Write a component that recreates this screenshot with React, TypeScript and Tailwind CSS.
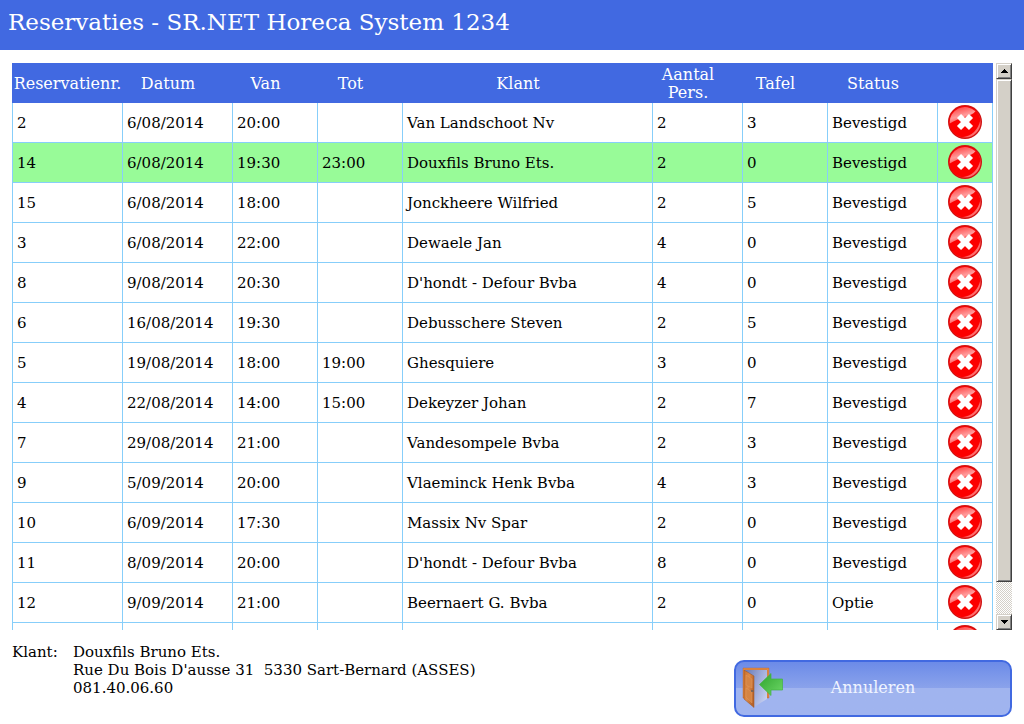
import { useRef } from 'react';

type Reservation = {
  nr: string;
  date: string;
  from: string;
  to: string;
  customer: string;
  persons: string;
  table: string;
  status: string;
};

function row(
  nr: string,
  date: string,
  from: string,
  to: string,
  customer: string,
  persons: string,
  table: string,
  status = 'Bevestigd',
): Reservation {
  return { nr, date, from, to, customer, persons, table, status };
}

const RESERVATIONS: Reservation[] = [
  row('2', '6/08/2014', '20:00', '', 'Van Landschoot Nv', '2', '3'),
  row('14', '6/08/2014', '19:30', '23:00', 'Douxfils Bruno Ets.', '2', '0'),
  row('15', '6/08/2014', '18:00', '', 'Jonckheere Wilfried', '2', '5'),
  row('3', '6/08/2014', '22:00', '', 'Dewaele Jan', '4', '0'),
  row('8', '9/08/2014', '20:30', '', "D'hondt - Defour Bvba", '4', '0'),
  row('6', '16/08/2014', '19:30', '', 'Debusschere Steven', '2', '5'),
  row('5', '19/08/2014', '18:00', '19:00', 'Ghesquiere', '3', '0'),
  row('4', '22/08/2014', '14:00', '15:00', 'Dekeyzer Johan', '2', '7'),
  row('7', '29/08/2014', '21:00', '', 'Vandesompele Bvba', '2', '3'),
  row('9', '5/09/2014', '20:00', '', 'Vlaeminck Henk Bvba', '4', '3'),
  row('10', '6/09/2014', '17:30', '', 'Massix Nv Spar', '2', '0'),
  row('11', '8/09/2014', '20:00', '', "D'hondt - Defour Bvba", '8', '0'),
  row('12', '9/09/2014', '21:00', '', 'Beernaert G. Bvba', '2', '0', 'Optie'),
  row('', '', '', '', '', '', '', ''),
];

const SELECTED = '14';

const COLUMNS = [
  { label: 'Reservatienr.', width: 'w-[111px]' },
  { label: 'Datum', width: 'w-[110px]' },
  { label: 'Van', width: 'w-[85px]' },
  { label: 'Tot', width: 'w-[85px]' },
  { label: 'Klant', width: '' },
  { label: 'Aantal Pers.', width: 'w-[90px]' },
  { label: 'Tafel', width: 'w-[85px]' },
  { label: 'Status', width: 'w-[110px]' },
];

function DeleteIcon() {
  return (
    <svg viewBox="0 0 34 34" className="block size-[34px]">
      <defs>
        <linearGradient id="gloss" x1="0.2" y1="0" x2="0.6" y2="1">
          <stop offset="0" stopColor="#ff3c3c" />
          <stop offset="0.55" stopColor="#ff9a9a" />
          <stop offset="1" stopColor="#ff3c3c" />
        </linearGradient>
        <linearGradient id="rim" x1="0.4" y1="0.4" x2="0.9" y2="0.9">
          <stop offset="0" stopColor="#ff0000" />
          <stop offset="1" stopColor="#ff8080" />
        </linearGradient>
      </defs>
      <circle cx="17" cy="17" r="17" fill="#d01010" />
      <circle cx="17" cy="17" r="15.6" fill="url(#rim)" />
      <path d="M32.4 15 A15.6 15.6 0 1 0 14 32.3 C24 31 30 25 32.4 15Z" fill="#fc0000" />
      <path d="M1.8 18.5 A15.2 15.2 0 0 1 27.5 6.2 C23 12 11 12 1.8 18.5Z" fill="url(#gloss)" />
      <path d="M11 11 L23 23 M23 11 L11 23" stroke="#fff" strokeWidth="5.8" />
    </svg>
  );
}

function DoorIcon() {
  return (
    <svg viewBox="0 0 42 42" className="block size-[42px] shrink-0">
      <defs>
        <linearGradient id="door" x1="0" y1="0" x2="1" y2="0.4">
          <stop offset="0" stopColor="#c96d28" />
          <stop offset="0.5" stopColor="#dd8a48" />
          <stop offset="1" stopColor="#b8642a" />
        </linearGradient>
        <linearGradient id="opening" x1="0" y1="0.2" x2="1" y2="0.8">
          <stop offset="0" stopColor="#6f80bb" />
          <stop offset="0.5" stopColor="#9eabd9" />
          <stop offset="1" stopColor="#c8d1f2" />
        </linearGradient>
        <linearGradient id="arrow" x1="0" y1="0" x2="1" y2="1">
          <stop offset="0" stopColor="#2fa32f" />
          <stop offset="1" stopColor="#6dd866" />
        </linearGradient>
      </defs>
      <path d="M1 1H27V31H25V3H3V31H1Z" fill="#e08b45" stroke="#b5632a" strokeWidth="0.4" />
      <path d="M3 3H25V32L12 40Z" fill="url(#opening)" />
      <path d="M2 3L12 9V40.5L2 32Z" fill="url(#door)" stroke="#9c501d" strokeWidth="0.5" />
      <path d="M4 8L10 12V21L4 18ZM4 21L10 25V36L4 30Z" fill="#d58443" stroke="#e5a061" strokeWidth="0.4" />
      <path d="M9 24H11.5" stroke="#6b625c" strokeWidth="1.6" />
      <path d="M17.5 17.5L29 6.5V12H40.5V23H29V28.5Z" fill="url(#arrow)" stroke="#43b243" strokeWidth="0.7" />
    </svg>
  );
}

const RAISED =
  'border border-t-[#d4d0c8] border-l-[#d4d0c8] border-r-[#404040] border-b-[#404040] bg-[#d4d0c8] shadow-[inset_1px_1px_0_#fff,inset_-1px_-1px_0_#808080]';

function ScrollBar({ onScroll }: { onScroll: (delta: number) => void }) {
  return (
    <div className="flex w-4 shrink-0 flex-col bg-[repeating-conic-gradient(#d4d0c8_0_25%,#fff_0_50%)] bg-[length:2px_2px]">
      <button
        type="button"
        aria-label="Omhoog"
        onClick={() => onScroll(-40)}
        className={`flex h-4 shrink-0 items-center justify-center ${RAISED}`}
      >
        <svg viewBox="0 0 7 4" className="h-1 w-[7px]" shapeRendering="crispEdges">
          <path d="M3 0H4V1H5V2H6V3H7V4H0V3H1V2H2V1H3Z" />
        </svg>
      </button>
      <div className="flex grow flex-col">
        <div className={`basis-[94%] ${RAISED}`} />
      </div>
      <button
        type="button"
        aria-label="Omlaag"
        onClick={() => onScroll(40)}
        className={`flex h-4 shrink-0 items-center justify-center ${RAISED}`}
      >
        <svg viewBox="0 0 7 4" className="h-1 w-[7px]" shapeRendering="crispEdges">
          <path d="M0 0H7V1H6V2H5V3H4V4H3V3H2V2H1V1H0Z" />
        </svg>
      </button>
    </div>
  );
}

export default function App() {
  const listRef = useRef<HTMLDivElement>(null);

  return (
    <div className="flex h-screen flex-col bg-white font-['DejaVu_Serif',serif] text-[15px] text-black">
      <header className="flex h-[50px] shrink-0 items-center bg-[#4169e1] px-2 pb-1.5">
        <h1 className="text-[23px] text-white">Reservaties - SR.NET Horeca System 1234</h1>
      </header>

      <main className="flex min-h-0 grow gap-[3px] px-3 pt-[13px]">
        <div ref={listRef} className="min-w-0 grow overflow-y-auto [scrollbar-width:none]">
          <table className="w-full table-fixed border-separate border-spacing-0">
            <thead>
              <tr className="h-10 bg-[#4169e1] text-base leading-[18px] text-white">
                {COLUMNS.map((column, index) => (
                  <th
                    key={column.label}
                    className={`px-0 pt-px pb-0 text-center font-normal ${index > 0 ? 'pr-5' : ''} ${column.width}`}
                  >
                    {column.label}
                  </th>
                ))}
                <th className="w-[55px] p-0" />
              </tr>
            </thead>
            <tbody>
              {RESERVATIONS.map((item) => (
                <tr key={item.nr} className={`h-10 ${item.nr === SELECTED ? 'bg-[#98fb98]' : 'bg-white'}`}>
                  {Object.values(item).map((value, index) => (
                    <td
                      key={index}
                      className={`border-r border-b border-[#87cefa] pt-0.5 pr-0 pb-0 pl-1 whitespace-nowrap ${
                        index === 0 ? 'border-l' : ''
                      }`}
                    >
                      {value}
                    </td>
                  ))}
                  <td className="border-r border-b border-[#87cefa] px-0 pt-0 pb-px">
                    <button type="button" aria-label="Verwijderen" className="mx-auto block rounded-full">
                      <DeleteIcon />
                    </button>
                  </td>
                </tr>
              ))}
            </tbody>
          </table>
        </div>
        <ScrollBar onScroll={(delta) => listRef.current?.scrollBy({ top: delta })} />
      </main>

      <footer className="flex shrink-0 items-end justify-between px-3 pt-[13px] pb-[7px]">
        <dl className="flex self-start leading-[18px]">
          <dt className="w-[61px]">Klant:</dt>
          <dd>
            Douxfils Bruno Ets.
            <br />
            Rue Du Bois D'ausse 31 &nbsp;5330 Sart-Bernard (ASSES)
            <br />
            081.40.06.60
          </dd>
        </dl>
        <button
          type="button"
          className="mt-[17px] grid h-[57px] w-[278px] grid-cols-[42px_1fr_42px] items-center rounded-[10px] border-2 border-[#4169e1] bg-linear-to-b from-[#6c8be8] via-[#8ba3eb] via-50% to-[#a0b4ef] to-50% px-1.5 pb-0.5 text-base text-[#f0f4ff]"
        >
          <DoorIcon />
          <span>Annuleren</span>
        </button>
      </footer>
    </div>
  );
}
